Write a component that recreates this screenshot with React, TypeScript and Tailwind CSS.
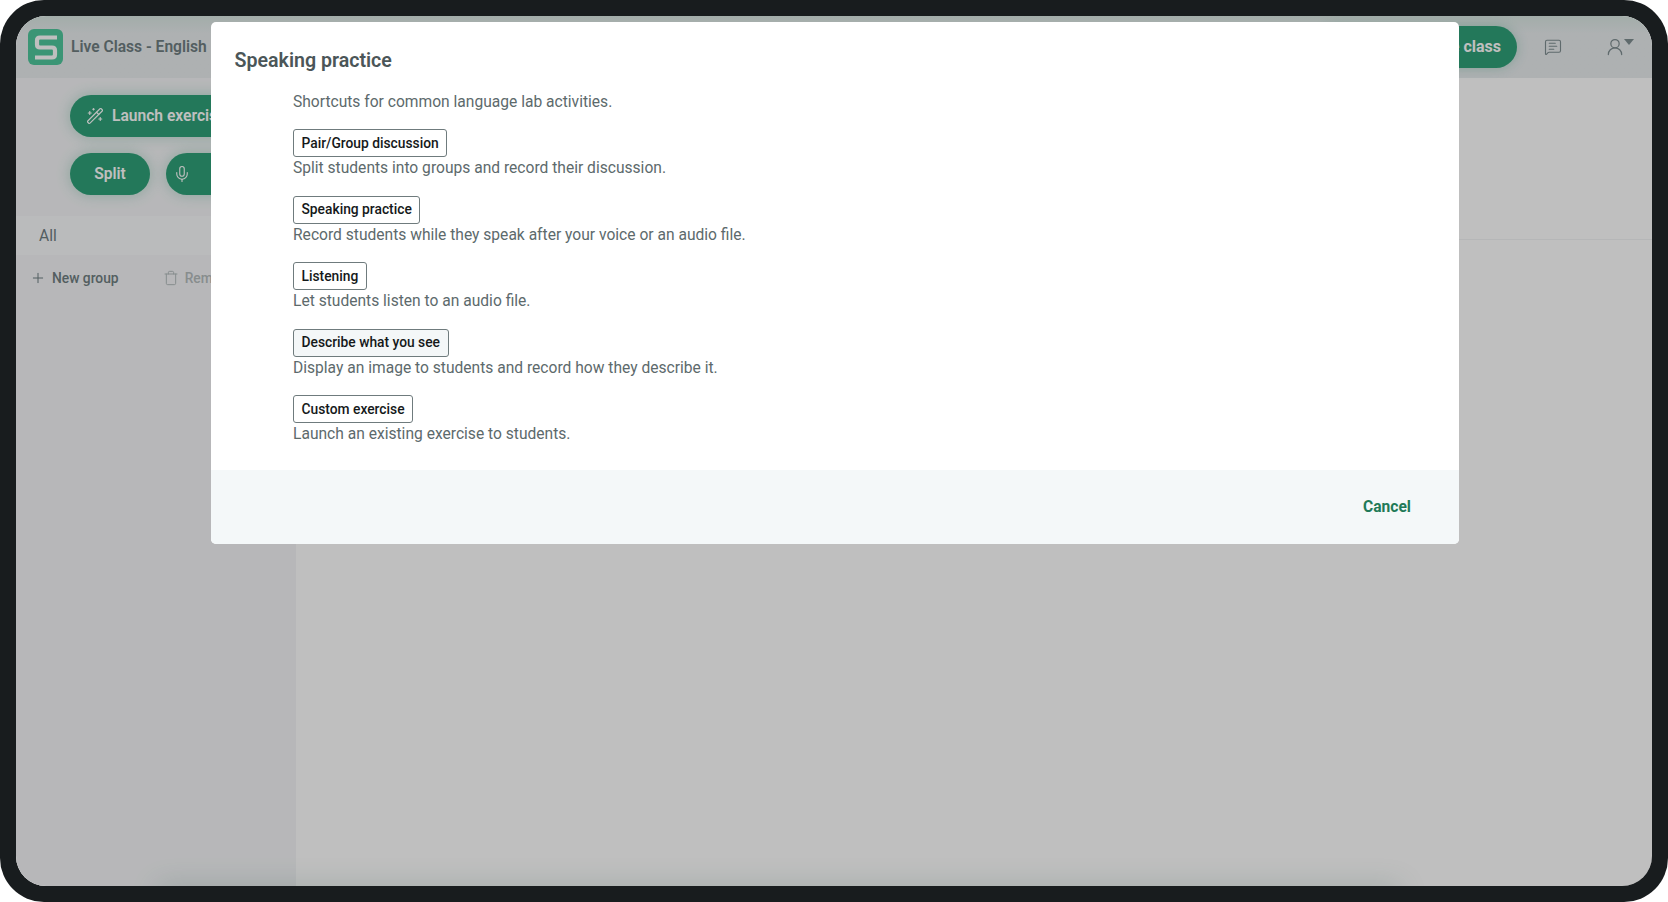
import { FC } from 'react';
import { Mic, MessageSquareText, Plus, Trash, UserRound, WandSparkles } from 'lucide-react';

const shortcuts = [
    { label: 'Pair/Group discussion', text: 'Split students into groups and record their discussion.' },
    { label: 'Speaking practice', text: 'Record students while they speak after your voice or an audio file.' },
    { label: 'Listening', text: 'Let students listen to an audio file.' },
    { label: 'Describe what you see', text: 'Display an image to students and record how they describe it.', hover: true },
    { label: 'Custom exercise', text: 'Launch an existing exercise to students.' },
];

const Logo: FC = () => (
    <div className="flex w-[35px] h-[36px] shrink-0 items-center justify-center rounded-md bg-[#4fc79c]">
        <svg width="24" height="25" viewBox="0 0 24 25" fill="none" stroke="#ffffff" strokeWidth="4.2">
            <path d="M23 2.5H6C4 2.5 3 3.5 3 5.5V9.5C3 11.5 4 12.5 6 12.5H18C20 12.5 21 13.5 21 15.5V19.5C21 21.5 20 22.5 18 22.5H1" />
        </svg>
    </div>
);

const Header: FC = () => (
    <div className="flex h-[62px] shrink-0 items-center justify-between bg-gradient-to-b from-[#d9e7e2] to-[#e8ecee] to-[28%] pl-[12px] pr-[18px]">
        <div className="flex items-center gap-[8px]">
            <Logo />
            <span className="pt-[1px] text-[15.6px] font-semibold text-[#6f7e81]">Live Class - English</span>
        </div>
        <div className="flex items-center">
            <button className="flex h-[42px] w-[200px] items-center justify-end rounded-full bg-[#2fa178] pr-[16px] text-[16px] font-bold text-white shadow-[0_0_12px_rgba(47,161,120,0.3)]">
                Leave class
            </button>
            <MessageSquareText size={18} strokeWidth={1.5} className="ml-[27px] text-[#7f8e91]" />
            <div className="ml-[43px] flex items-start">
                <UserRound size={20} strokeWidth={1.5} className="text-[#7f8e91]" />
                <div className="mt-[2px] -ml-[1px] h-0 w-0 border-x-[5px] border-t-[6px] border-x-transparent border-t-[#7f8e91]" />
            </div>
        </div>
    </div>
);

const Sidebar: FC = () => (
    <div className="flex w-[280px] shrink-0 flex-col bg-[#f4f5f7]">
        <div className="flex flex-col gap-[16px] pt-[17px] pl-[54px]">
            <button className="flex h-[42px] w-[230px] items-center gap-[8px] rounded-full bg-[#2fa178] pl-[16px] text-[15.6px] font-semibold text-white shadow-[0_0_14px_rgba(47,161,120,0.3)]">
                <WandSparkles size={18} strokeWidth={1.5} />
                <span className="pt-[1px]">Launch exercise</span>
            </button>
            <div className="flex gap-[16px]">
                <button className="flex h-[42px] w-[80px] items-center justify-center rounded-full bg-[#2fa178] pt-[1px] text-[15.6px] font-semibold text-white shadow-[0_0_14px_rgba(47,161,120,0.3)]">
                    Split
                </button>
                <button className="flex h-[42px] w-[120px] items-center rounded-full bg-[#2fa178] pl-[7px] text-white shadow-[0_0_14px_rgba(47,161,120,0.3)]">
                    <Mic size={18} strokeWidth={1.5} />
                </button>
            </div>
        </div>
        <div className="mt-[21px] flex h-[39px] items-center bg-[#f9fafb] pl-[23px] pt-[2px] text-[15.6px] text-[#6f7e81]">All</div>
        <div className="mt-[7px] flex h-[32px] items-center pl-[14px] text-[13.8px]">
            <Plus size={16} strokeWidth={1.5} className="text-[#6f7e81]" />
            <span className="ml-[6px] font-medium text-[#6f7e81]">New group</span>
            <Trash size={16} strokeWidth={1.5} className="ml-[44px] text-[#b4bcbd]" />
            <span className="ml-[6px] font-medium text-[#b4bcbd]">Remove</span>
        </div>
    </div>
);

const Dialog: FC = () => (
    <div className="ml-[195px] mt-[6px] flex h-[522px] w-[1248px] flex-col overflow-hidden rounded-[5px] bg-white">
        <div className="flex-1 pl-[23.5px] pt-[25px]">
            <h2 className="text-[19.6px] leading-[28px] font-semibold text-[#4b5658]">Speaking practice</h2>
            <div className="mt-[15px] pl-[58.5px] text-[15.6px] text-[#5d6a6c]">
                <p className="leading-[24px]">Shortcuts for common language lab activities.</p>
                <div className="mt-[15px] flex flex-col gap-[15px]">
                    {shortcuts.map((item) => (
                        <div key={item.label} className="flex flex-col items-start">
                            <button className={`h-[28px] rounded-[3px] border border-[#6f7b7d] px-[7.5px] text-[13.8px] font-medium text-[#15191a] ${item.hover ? 'bg-[#f4f7f8]' : 'bg-white'}`}>
                                {item.label}
                            </button>
                            <p className="leading-[23.5px]">{item.text}</p>
                        </div>
                    ))}
                </div>
            </div>
        </div>
        <div className="flex h-[74px] shrink-0 items-center justify-end bg-[#f4f8f9] pr-[48px] pt-[1px]">
            <button className="text-[15.6px] font-bold text-[#1f7a58]">Cancel</button>
        </div>
    </div>
);

const App: FC = () => (
    <div className="h-[902px] w-full overflow-hidden bg-white font-['Roboto',sans-serif]">
        <div className="h-full rounded-[44px] bg-[#181c1e] p-[16px]">
            <div className="relative flex h-full flex-col overflow-hidden rounded-[30px] bg-white">
                <Header />
                <div className="flex flex-1">
                    <Sidebar />
                    <div className="flex-1">
                        <div className="h-[162px] border-b border-[#f2f3f4]" />
                    </div>
                </div>
                <div className="absolute -bottom-[16px] left-[140px] right-[250px] h-[16px] rounded-full shadow-[0_0_28px_rgba(47,110,90,0.22)]" />
                <div className="absolute inset-0 flex items-start bg-black/25">
                    <Dialog />
                </div>
            </div>
        </div>
    </div>
);

export default App;
